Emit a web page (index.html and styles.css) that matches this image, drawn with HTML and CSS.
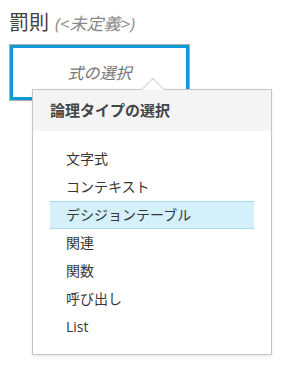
FILE: index.html
```html
<!DOCTYPE html>
<html lang="ja">
<head>
    <meta charset="UTF-8">
    <meta name="viewport" content="width=device-width, initial-scale=1.0">
    <title>罰則</title>
    <link rel="stylesheet" href="styles.css">
</head>
<body>
    <div class="field">
        <div class="field-label">
            <span class="name">罰則</span>
            <span class="undefined">(&lt;未定義&gt;)</span>
        </div>
        <div class="expr-select">
            <span class="placeholder">式の選択</span>
        </div>
    </div>

    <div class="type-menu">
        <div class="type-menu-header">論理タイプの選択</div>
        <ul class="type-list">
            <li>文字式</li>
            <li>コンテキスト</li>
            <li class="active">デシジョンテーブル</li>
            <li>関連</li>
            <li>関数</li>
            <li>呼び出し</li>
            <li>List</li>
        </ul>
    </div>
</body>
</html>
```

FILE: styles.css
```css
body {
    margin: 0;
    font-family: 'Open Sans', 'Noto Sans CJK JP', sans-serif;
    color: #333;
    background: #fff;
}
.field {
    padding: 10px 9px;
}
.field-label {
    display: flex;
    align-items: baseline;
    gap: 6px;
    height: 26px;
    line-height: 26px;
}
.name {
    font-size: 20px;
    color: #404040;
}
.undefined {
    font-size: 17px;
    font-style: italic;
    color: #8a8a8a;
}
.expr-select {
    margin-top: 8px;
    width: 181px;
    height: 57px;
    box-sizing: border-box;
    border: 1px solid #b0b0b0;
    box-shadow: inset 0 0 0 3px #0f9ad7;
    display: flex;
    align-items: center;
    justify-content: center;
}
.placeholder {
    font-size: 16px;
    font-style: italic;
    color: #777;
    margin-top: -2px;
}
.type-menu {
    position: absolute;
    left: 32px;
    top: 89px;
    width: 240px;
    height: 266px;
    box-sizing: border-box;
    border: 1px solid #c4c4c4;
    background: #fff;
    box-shadow: 0 2px 4px rgba(0, 0, 0, 0.08);
}
.type-menu:before {
    content: "";
    position: absolute;
    left: 112px;
    top: -9px;
    width: 15px;
    height: 15px;
    background: #fff;
    border-left: 1px solid #d0d0d0;
    border-top: 1px solid #d0d0d0;
    transform: rotate(45deg);
}
.type-menu-header {
    position: relative;
    height: 41px;
    line-height: 41px;
    padding-left: 17px;
    background: #f4f4f4;
    font-size: 15px;
    font-weight: bold;
    color: #454545;
}
.type-list {
    list-style: none;
    margin: 0;
    padding: 14px 17px 0;
}
.type-list li {
    height: 28px;
    line-height: 28px;
    padding-left: 16px;
    font-size: 14px;
    color: #363636;
    box-sizing: border-box;
}
.type-list li.active {
    background: #d4f1fb;
    border-top: 1px solid #a9dcee;
    border-bottom: 1px solid #a9dcee;
    line-height: 26px;
}
```
